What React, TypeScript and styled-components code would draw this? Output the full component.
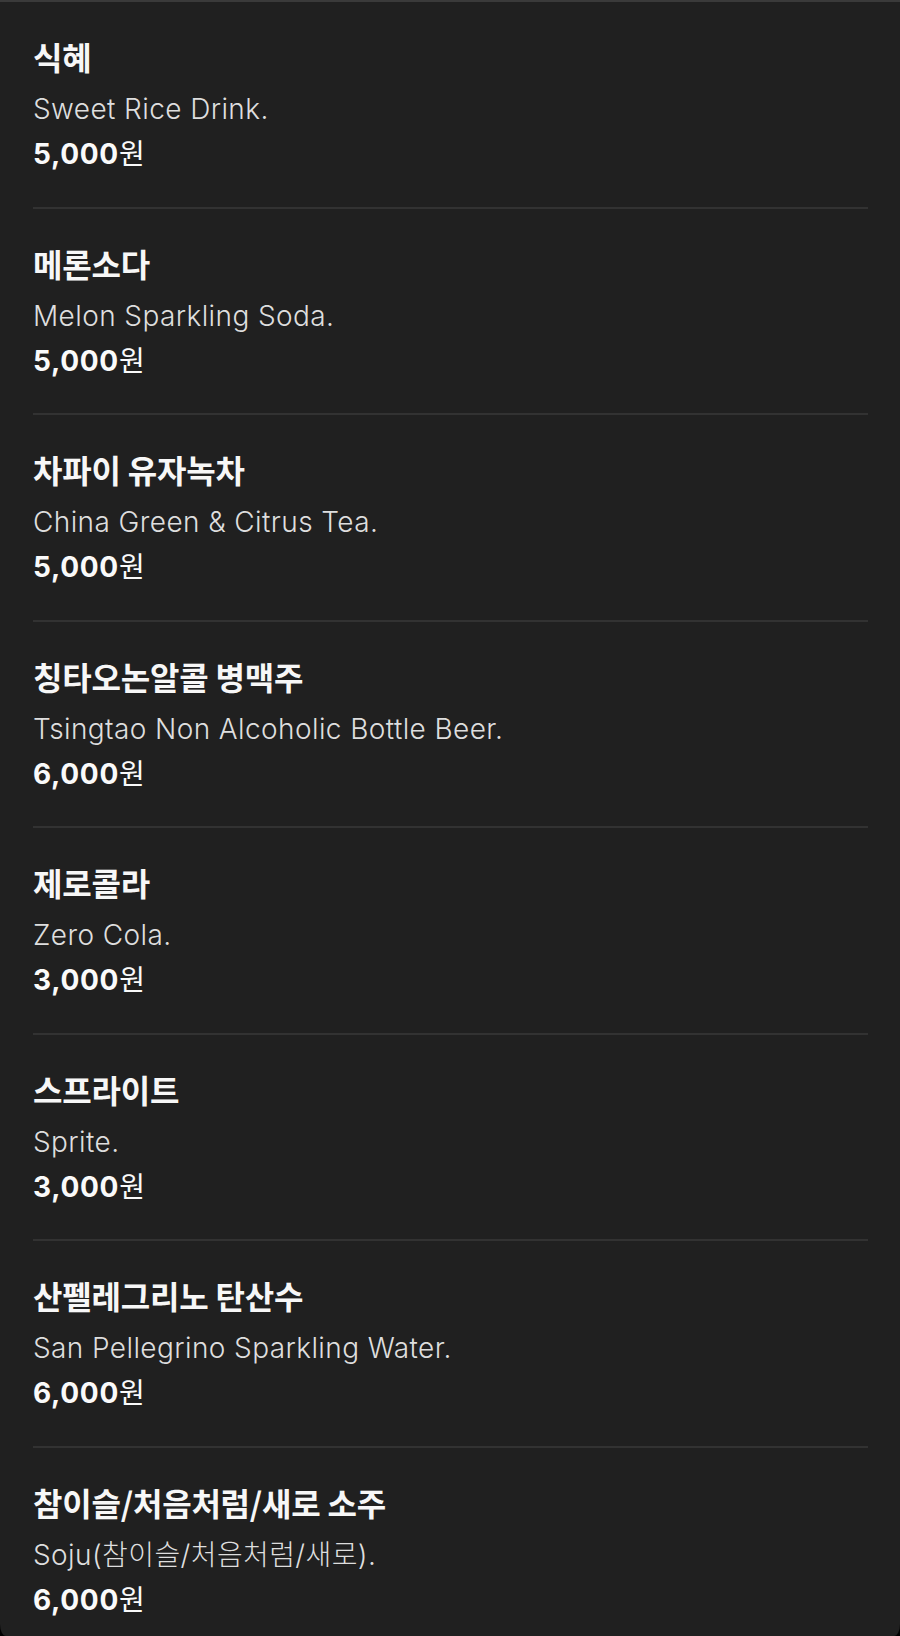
import React from "react";
import styled, { createGlobalStyle } from "styled-components";

const GlobalStyle = createGlobalStyle`
  html, body {
    margin: 0;
    padding: 0;
    background: #000000;
  }
  * { box-sizing: border-box; }
`;

const Sheet = styled.div`
  width: 900px;
  height: 1636px;
  overflow: hidden;
  background: #202020;
  border-top: 2px solid #3a3a3a;
  border-radius: 0 0 6px 6px / 0 0 12px 12px;
  padding: 0 32px 0 33px;
  font-family: Inter, "Noto Sans CJK KR", "Noto Sans", sans-serif;
`;

const List = styled.ul`
  list-style: none;
  margin: 0;
  padding: 0;
`;

const Item = styled.li<{ $last?: boolean }>`
  display: flex;
  flex-direction: column;
  height: ${(p) => (p.$last ? "auto" : "206.5px")};
  padding-top: 32px;
  border-bottom: ${(p) => (p.$last ? "none" : "2px solid #323232")};
`;

const Title = styled.h3`
  margin: 0;
  font-family: "Noto Sans CJK KR", Inter, sans-serif;
  font-size: 32px;
  font-weight: 700;
  line-height: 44px;
  color: #f7f7f7;
  letter-spacing: -0.2px;
`;

const Desc = styled.p`
  margin: 9px 0 0;
  font-size: 28px;
  font-weight: 300;
  line-height: 44px;
  color: #dedede;
  letter-spacing: 0.4px;
`;

const Price = styled.p`
  margin: 0;
  font-size: 28px;
  font-weight: 700;
  line-height: 42px;
  color: #fafafa;
  letter-spacing: 0.7px;
`;

const Won = styled.span`
  font-family: "Noto Sans CJK KR", sans-serif;
  font-weight: 400;
  font-size: 28px;
  letter-spacing: 0;
`;

type Drink = { name: string; desc: string; price: string };

const drinks: Drink[] = [
  { name: "식혜", desc: "Sweet Rice Drink.", price: "5,000" },
  { name: "메론소다", desc: "Melon Sparkling Soda.", price: "5,000" },
  { name: "차파이 유자녹차", desc: "China Green & Citrus Tea.", price: "5,000" },
  { name: "칭타오논알콜 병맥주", desc: "Tsingtao Non Alcoholic Bottle Beer.", price: "6,000" },
  { name: "제로콜라", desc: "Zero Cola.", price: "3,000" },
  { name: "스프라이트", desc: "Sprite.", price: "3,000" },
  { name: "산펠레그리노 탄산수", desc: "San Pellegrino Sparkling Water.", price: "6,000" },
  { name: "참이슬/처음처럼/새로 소주", desc: "Soju(참이슬/처음처럼/새로).", price: "6,000" },
];

export default function App() {
  return (
    <>
      <GlobalStyle />
      <Sheet>
        <List>
          {drinks.map((d, i) => (
            <Item key={d.name} $last={i === drinks.length - 1}>
              <Title>{d.name}</Title>
              <Desc>{d.desc}</Desc>
              <Price>
                {d.price}
                <Won>원</Won>
              </Price>
            </Item>
          ))}
        </List>
      </Sheet>
    </>
  );
}
